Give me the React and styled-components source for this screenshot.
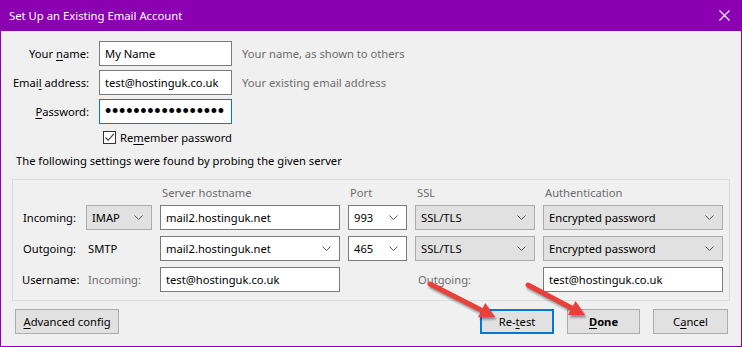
import React from "react";
import styled, { createGlobalStyle } from "styled-components";

const FONT = `"Noto Sans", "Open Sans", sans-serif`;
const FS = "11.2px";

const Global = createGlobalStyle`
  html, body { margin: 0; padding: 0; background: #f0f0f0; }
  body { font-family: ${FONT}; font-size: ${FS}; color: #000; }
  * { box-sizing: border-box; }
`;

const Window = styled.div`
  position: relative;
  width: 742px;
  height: 347px;
  border: 1px solid #8a00b0;
  border-top: none;
  background: #f0f0f0;
  display: flex;
  flex-direction: column;
  overflow: hidden;
`;

const TitleBar = styled.div`
  height: 31px;
  margin: 0 -1px;
  background: #8b00b1;
  color: #fff;
  display: flex;
  align-items: center;
  justify-content: space-between;
  padding: 0 12px 0 9px;
  font-size: 11.3px;
`;

const Close = styled.svg`
  width: 11px;
  height: 11px;
  margin-top: -1px;
`;

const Form = styled.div`
  display: grid;
  grid-template-columns: 88px 133px auto;
  column-gap: 10px;
  row-gap: 4px;
  grid-template-rows: 25px 25px 25px 20px;
  padding-top: 10px;
  align-items: center;
`;

const Label = styled.label`
  text-align: right;
  white-space: nowrap;
`;

const Hint = styled.span`
  color: #6d6d6d;
  white-space: nowrap;
`;

const U = styled.span`
  text-decoration: underline;
  text-underline-offset: 2px;
`;

const TextBox = styled.div`
  height: 25px;
  background: #fff;
  border: 1px solid ${(p) => (p.$focus ? "#0078d7" : "#7a7a7a")};
  display: flex;
  align-items: center;
  padding: 0 6px 0 5px;
  white-space: nowrap;
  overflow: hidden;
`;

const Dots = styled.span`
  font-family: "Liberation Sans", sans-serif;
  font-size: 18px;
  letter-spacing: 0.75px;
  line-height: 1;
  margin-top: -1px;
`;

const CheckRow = styled.div`
  grid-column: 2 / 4;
  display: flex;
  align-items: center;
  gap: 4px;
  padding-left: 4px;
  height: 20px;
  margin-top: -1px;
`;

const CheckBox = styled.span`
  width: 13px;
  height: 13px;
  border: 1px solid #333;
  background: #fff;
  display: inline-flex;
  align-items: center;
  justify-content: center;
`;

const Note = styled.div`
  padding-left: 15px;
  height: 18px;
  line-height: 18px;
  margin-top: 4px;
`;

const Group = styled.div`
  margin: 9px 11px 0 11px;
  border: 1px solid #dcdcdc;
  padding: 0 0 8px 9px;
  display: grid;
  grid-template-columns: 56px 66px 180px 59px 120px 180px;
  column-gap: 8px;
  grid-template-rows: 19px 25px 25px 25px;
  row-gap: 6px;
  align-items: center;
`;

const Head = styled.span`
  color: #6d6d6d;
  padding-left: 2px;
  line-height: 14px;
  align-self: end;
  margin-bottom: -1px;
  grid-column: ${(p) => p.$col};
`;

const RowLabel = styled.span`
  white-space: nowrap;
  padding-left: ${(p) => p.$pl || 0}px;
  color: ${(p) => (p.$muted ? "#6d6d6d" : "#000")};
`;

const Select = styled.div`
  height: 25px;
  background: ${(p) => (p.$white ? "#fff" : "#e1e1e1")};
  border: 1px solid ${(p) => (p.$white ? "#7a7a7a" : "#adadad")};
  display: flex;
  align-items: center;
  justify-content: space-between;
  padding: 0 8px 0 5px;
  white-space: nowrap;
`;

const Chevron = () => (
  <svg width="9" height="5" viewBox="0 0 9 5" style={{ flex: "none" }}>
    <path d="M0.5 0.5 L4.5 4.5 L8.5 0.5" fill="none" stroke="#555" strokeWidth="1" />
  </svg>
);

const Buttons = styled.div`
  display: flex;
  align-items: center;
  margin: 8px 13px 0 14px;
  gap: 13px;
`;

const Spacer = styled.div`
  flex: 1;
`;

const Button = styled.div`
  width: ${(p) => p.$w}px;
  height: 25px;
  background: #e1e1e1;
  border: ${(p) => (p.$default ? "2px solid #0078d7" : "1px solid #adadad")};
  display: flex;
  align-items: center;
  justify-content: center;
  font-weight: ${(p) => (p.$bold ? 700 : 400)};
  white-space: nowrap;
`;

const Overlay = styled.svg`
  position: absolute;
  left: -1px;
  top: 0;
  pointer-events: none;
`;

function Arrow({ x1, y1, x2, y2 }) {
  const dx = x2 - x1;
  const dy = y2 - y1;
  const len = Math.hypot(dx, dy);
  const ux = dx / len;
  const uy = dy / len;
  const hl = 15;
  const hw = 8;
  const bx = x2 - ux * hl;
  const by = y2 - uy * hl;
  const px = -uy;
  const py = ux;
  const head = `${x2},${y2} ${bx + px * hw},${by + py * hw} ${bx - px * hw},${by - py * hw}`;
  return (
    <g>
      <g transform="translate(1.5,2.5)" opacity="0.45" filter="url(#blur)">
        <line x1={x1} y1={y1} x2={bx} y2={by} stroke="#222" strokeWidth="5" strokeLinecap="round" />
        <polygon points={head} fill="#222" />
      </g>
      <line x1={x1} y1={y1} x2={bx + ux * 2} y2={by + uy * 2} stroke="#e9403c" strokeWidth="5" strokeLinecap="round" />
      <polygon points={head} fill="#e9403c" />
    </g>
  );
}

export default function App() {
  return (
    <>
      <Global />
      <Window>
        <TitleBar>
          <span>Set Up an Existing Email Account</span>
          <Close viewBox="0 0 11 11">
            <path d="M0.5 0.5 L10.5 10.5 M10.5 0.5 L0.5 10.5" stroke="#fff" strokeWidth="1.1" />
          </Close>
        </TitleBar>

        <Form>
          <Label>
            Your <U>n</U>ame:
          </Label>
          <TextBox>My Name</TextBox>
          <Hint>Your name, as shown to others</Hint>

          <Label>
            Emai<U>l</U> address:
          </Label>
          <TextBox>test@hostinguk.co.uk</TextBox>
          <Hint>Your existing email address</Hint>

          <Label>
            <U>P</U>assword:
          </Label>
          <TextBox $focus>
            <Dots>•••••••••••••••••</Dots>
          </TextBox>
          <span />

          <span />
          <CheckRow>
            <CheckBox>
              <svg width="11" height="11" viewBox="0 0 11 11">
                <path d="M1.5 5.5 L4.2 8.3 L9.8 1.8" fill="none" stroke="#333" strokeWidth="1.1" />
              </svg>
            </CheckBox>
            <span>
              Re<U>m</U>ember password
            </span>
          </CheckRow>
        </Form>

        <Note>The following settings were found by probing the given server</Note>

        <Group>
          <Head $col="3">Server hostname</Head>
          <Head $col="4">Port</Head>
          <Head $col="5">SSL</Head>
          <Head $col="6">Authentication</Head>

          <RowLabel $pl={1}>Incoming:</RowLabel>
          <Select>
            IMAP <Chevron />
          </Select>
          <TextBox>mail2.hostinguk.net</TextBox>
          <Select $white>
            993 <Chevron />
          </Select>
          <Select>
            SSL/TLS <Chevron />
          </Select>
          <Select>
            Encrypted password <Chevron />
          </Select>

          <RowLabel $pl={1}>Outgoing:</RowLabel>
          <RowLabel $pl={2}>SMTP</RowLabel>
          <Select $white>
            mail2.hostinguk.net <Chevron />
          </Select>
          <Select $white>
            465 <Chevron />
          </Select>
          <Select>
            SSL/TLS <Chevron />
          </Select>
          <Select>
            Encrypted password <Chevron />
          </Select>

          <RowLabel>Username:</RowLabel>
          <RowLabel $pl={2} $muted>
            Incoming:
          </RowLabel>
          <TextBox>test@hostinguk.co.uk</TextBox>
          <span />
          <RowLabel $pl={3} $muted>
            Outgoing:
          </RowLabel>
          <TextBox>test@hostinguk.co.uk</TextBox>
        </Group>

        <Buttons>
          <Button $w={104}>
            <span>
              <U>A</U>dvanced config
            </span>
          </Button>
          <Spacer />
          <Button $w={74} $default>
            <span>
              Re-<U>t</U>est
            </span>
          </Button>
          <Button $w={73} $bold>
            <span>
              <U>D</U>one
            </span>
          </Button>
          <Button $w={75}>
            <span>
              C<U>a</U>ncel
            </span>
          </Button>
        </Buttons>

        <Overlay width="742" height="347" viewBox="0 0 742 347">
          <defs>
            <filter id="blur" x="-20%" y="-20%" width="140%" height="140%">
              <feGaussianBlur stdDeviation="1.2" />
            </filter>
          </defs>
          <Arrow x1={430} y1={284} x2={495} y2={317} />
          <Arrow x1={528} y1={285} x2={585} y2={315} />
        </Overlay>
      </Window>
    </>
  );
}
